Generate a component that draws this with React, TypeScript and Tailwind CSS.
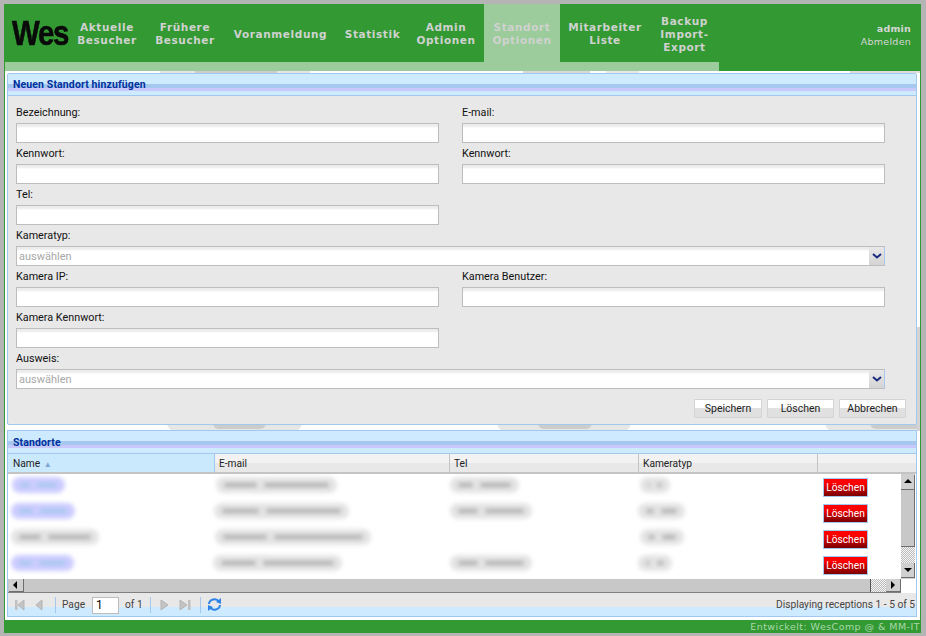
import React from 'react';

const NAV = [
  { lines: ['Aktuelle', 'Besucher'], w: 'w-[78px]' },
  { lines: ['Frühere', 'Besucher'], w: 'w-[78px]' },
  { lines: ['Voranmeldung'], w: 'w-[113px]' },
  { lines: ['Statistik'], w: 'w-[71px]' },
  { lines: ['Admin', 'Optionen'], w: 'w-[76px]' },
  { lines: ['Standort', 'Optionen'], w: 'w-[76px]', active: true },
  { lines: ['Mitarbeiter', 'Liste'], w: 'w-[90px]' },
  { lines: ['Backup', 'Import-', 'Export'], w: 'w-[69px]' },
];

const ROWS = [
  { name: [4, 53], nameBlue: true, mail: [2, 121], tel: [1, 69], cam: [2, 30] },
  { name: [3, 64], nameBlue: true, mail: [0, 135], tel: [1, 82], cam: [0, 47] },
  { name: [3, 88], nameBlue: false, mail: [1, 156], tel: null, cam: [2, 44] },
  { name: [3, 63], nameBlue: true, mail: [-1, 129], tel: [1, 82], cam: [0, 34] },
];

function Field({ label, className = '' }: { label: string; className?: string }) {
  return (
    <div className={`h-[41px] ${className}`}>
      <div className="h-[21px] pt-[4px] text-[10.8px] leading-[14px] text-[#111]">{label}</div>
      <div className="h-[20px] border border-[#bdbdbd] bg-gradient-to-b from-[#ececec] from-[2px] to-white to-[4px]" />
    </div>
  );
}

function Combo({ label }: { label: string }) {
  return (
    <div className="col-span-2 h-[41px]">
      <div className="h-[21px] pt-[4px] text-[10.8px] leading-[14px] text-[#111]">{label}</div>
      <div className="flex h-[20px] border border-[#bdbdbd] border-r-0 bg-gradient-to-b from-[#ececec] from-[2px] to-white to-[4px]">
        <div className="flex-1 pl-[2px] text-[11px] leading-[19px] text-[#a8a8a8]">auswählen</div>
        <div className="flex w-[16px] items-center justify-center border-r border-[#a9c6ec] bg-gradient-to-b from-[#e8e8e8] to-[#d4d4d4]">
          <svg width="10" height="6" viewBox="0 0 10 6">
            <path d="M1 1 L5 4.5 L9 1" fill="none" stroke="#1b2a80" strokeWidth="2" />
          </svg>
        </div>
      </div>
    </div>
  );
}

function PanelTitle({ title, tall }: { title: string; tall?: boolean }) {
  return (
    <div className={`relative ${tall ? 'h-[23px]' : 'h-[22px]'} border-b border-[#a3c8ee] bg-[#ceeaff]`}>
      <div className="absolute inset-x-0 top-[10px] h-[4px] bg-[#a6c8ef]" />
      <div className="absolute inset-x-0 top-[14px] h-[3px] bg-[#c8c8fc]" />
      <div
        className={`absolute left-[5px] ${tall ? 'top-[5px]' : 'top-[4px]'} text-[10.5px] font-bold leading-[14px] tracking-[0.12px] text-[#00309c]`}
      >
        {title}
      </div>
    </div>
  );
}

function WinButton({ dir, className = '' }: { dir: 'up' | 'down' | 'left' | 'right'; className?: string }) {
  const pts = {
    up: '1,6 5,2 9,6',
    down: '1,3 5,7 9,3',
    left: '6,1 2,5 6,9',
    right: '3,1 7,5 3,9',
  }[dir];
  return (
    <div className={`flex items-center justify-center bg-[#d0d0d0] border-r border-b border-[#6e6e6e] ${className}`}>
      <svg width="10" height="10" viewBox="0 0 10 10">
        <polygon points={pts} fill="#000" />
      </svg>
    </div>
  );
}

const dither = 'bg-[repeating-conic-gradient(#bdbdbd_0_25%,#f4f4f4_0_50%)] bg-[length:2px_2px]';

function Blur({ at, w, blue }: { at: number; w: number; blue?: boolean }) {
  return (
    <div
      className={`mt-[3px] flex h-[16px] items-center gap-[7px] rounded-full px-[8px] blur-[2px] ${blue ? 'bg-[#ccccff]' : 'bg-[#e4e4e4]'}`}
      style={{ marginLeft: at, width: w }}
    >
      <div className={`h-[4px] flex-1 rounded-full ${blue ? 'bg-[#a4c8ec]' : 'bg-[#b0b0b0]'}`} />
      <div className={`h-[4px] flex-[2] rounded-full ${blue ? 'bg-[#a4c8ec]' : 'bg-[#b0b0b0]'}`} />
    </div>
  );
}

function DataRow({ row }: { row: (typeof ROWS)[number] }) {
  return (
    <div className="flex h-[26px]">
      <div className="w-[206px]">
        <Blur at={row.name[0]} w={row.name[1]} blue={row.nameBlue} />
      </div>
      <div className="w-[235px]">
        <Blur at={row.mail[0]} w={row.mail[1]} />
      </div>
      <div className="w-[189px]">{row.tel && <Blur at={row.tel[0]} w={row.tel[1]} />}</div>
      <div className="w-[179px]">
        <Blur at={row.cam[0]} w={row.cam[1]} />
      </div>
      <div className="flex-1 pl-[6px] pt-[4px]">
        <button className="block h-[19px] w-[45px] border border-[#a3c8ee] bg-gradient-to-b from-[#ff0000] from-[25%] to-[#7a0000] text-center text-[10.2px] leading-[17px] text-white">
          Löschen
        </button>
      </div>
    </div>
  );
}

function PagerIcon({ points, bar }: { points: string; bar?: number }) {
  return (
    <svg width="12" height="12" viewBox="0 0 12 12">
      <polygon points={points} fill="#c4c4c4" stroke="#b4b4b4" />
      {bar !== undefined && <rect x={bar} y="1" width="2.5" height="10" fill="#c0c0c0" />}
    </svg>
  );
}

function FootButton({ label, w }: { label: string; w: string }) {
  return (
    <button
      className={`h-[19px] ${w} rounded-[1px] border border-[#d4d4d4] bg-gradient-to-b from-white from-[50%] to-[#e0e0e0] to-[50%] text-[10.5px] leading-[17px] text-[#222]`}
    >
      {label}
    </button>
  );
}

export default function App() {
  return (
    <div className="h-[636px] w-[926px] overflow-hidden bg-[#b4b4b4] pb-[3px] pl-[4px] pr-[5px] pt-[4px] font-['Roboto',sans-serif]">
      <div className="flex h-full flex-col bg-[#339933] px-[1px]">
        <header className="flex h-[67px] shrink-0">
          <div className="w-[714px] shrink-0">
            <div className="flex h-[58px]">
              <div className="flex w-[63px] items-center pb-[1px] pl-[7px]">
                <span className="origin-left scale-x-[0.84] font-['Liberation_Sans'] text-[35px] font-bold leading-none tracking-[-1.5px] text-[#0a0a0a] [-webkit-text-stroke:0.6px_#0a0a0a]">
                  Wes
                </span>
              </div>
              {NAV.map((item) => (
                <div
                  key={item.lines[0]}
                  className={`flex ${item.w} flex-col items-center justify-center pt-[2px] text-center font-['DejaVu_Sans'] text-[10.5px] font-bold leading-[13px] tracking-[0.6px] text-[#cfd2cf] ${
                    item.active ? 'bg-[#9ccc9c]' : ''
                  }`}
                >
                  {item.lines.map((line) => (
                    <span key={line}>{line}</span>
                  ))}
                </div>
              ))}
            </div>
            <div className="h-[9px] bg-[#9ccc9c]" />
          </div>
          <div className="flex flex-1 flex-col items-end pr-[9px] pt-[18px] font-['DejaVu_Sans'] text-[#d6d6d6]">
            <span className="text-[9.5px] font-bold leading-[13px] tracking-[0.2px]">admin</span>
            <span className="text-[9.5px] leading-[13px] tracking-[0.25px]">Abmelden</span>
          </div>
        </header>

        <main className="relative flex-1 overflow-hidden bg-white pl-[2px] pr-[3px] pt-[2px]">
          {/* watermark showing through the gaps */}
          <div className="absolute left-[155px] top-0 h-[2px] w-[150px] bg-[#e4e4e4]" />
          <div className="absolute left-[190px] top-0 h-[2px] w-[82px] bg-[#cccccc]" />
          <div className="absolute left-[518px] top-0 h-[2px] w-[67px] bg-[#d8d8d8]" />
          <div className="absolute left-[601px] top-0 h-[2px] w-[33px] bg-[#e8e8e8]" />
          <div className="absolute left-[845px] top-0 h-[2px] w-[70px] bg-[#dcdcdc]" />
          <div className="absolute left-[162px] top-[352px] h-[8px] w-[135px] rounded-b-[40px] bg-[#e6e6e6]" />
          <div className="absolute left-[208px] top-[352px] h-[6px] w-[53px] rounded-b-[24px] bg-[#cccccc]" />
          <div className="absolute left-[492px] top-[352px] h-[8px] w-[134px] rounded-b-[40px] bg-[#e6e6e6]" />
          <div className="absolute left-[533px] top-[352px] h-[6px] w-[54px] rounded-b-[24px] bg-[#cccccc]" />
          <div className="absolute left-[820px] top-[352px] h-[8px] w-[100px] rounded-bl-[40px] bg-[#e6e6e6]" />
          <div className="absolute left-[865px] top-[352px] h-[6px] w-[50px] rounded-bl-[24px] bg-[#cccccc]" />
          <div className="absolute right-0 top-[256px] h-[104px] w-[3px] bg-[#d4d4d4]" />

          <section className="relative h-[352px] rounded-[2px] border border-[#a3c8ee] bg-[#e8e8e8]">
            <PanelTitle title="Neuen Standort hinzufügen" />
            <div className="px-[8px] pt-[6px]">
              <div className="grid w-[869px] grid-cols-[423px_423px] gap-x-[23px]">
                <Field label="Bezeichnung:" />
                <Field label="E-mail:" />
                <Field label="Kennwort:" />
                <Field label="Kennwort:" />
                <Field label="Tel:" />
                <div />
                <Combo label="Kameratyp:" />
                <Field label="Kamera IP:" />
                <Field label="Kamera Benutzer:" />
                <Field label="Kamera Kennwort:" />
                <div />
                <Combo label="Ausweis:" />
              </div>
              <div className="flex justify-end gap-[5px] pr-[2px] pt-[10px]">
                <FootButton label="Speichern" w="w-[68px]" />
                <FootButton label="Löschen" w="w-[67px]" />
                <FootButton label="Abbrechen" w="w-[67px]" />
              </div>
            </div>
          </section>

          <section className="relative mt-[5px] flex h-[187px] flex-col border border-[#a3c8ee] bg-white">
            <PanelTitle title="Standorte" tall />
            <div className="flex h-[20px] shrink-0 border-b-2 border-[#c4c4c4] text-[10.2px] leading-[20px] text-[#222] [&>div]:bg-gradient-to-b [&>div]:from-[#f2f2f2] [&>div]:from-[50%] [&>div]:to-[#e8e8e8] [&>div]:to-[50%]">
              <div className="w-[206px] !bg-none !bg-[#cbe9fd] pl-[5px]">
                Name <span className="ml-[1px] text-[8px] text-[#7fa5d8]">▲</span>
              </div>
              <div className="w-[235px] border-l border-[#a3c8ee] pl-[4px]">E-mail</div>
              <div className="w-[189px] border-l border-[#c4c4c4] pl-[4px]">Tel</div>
              <div className="w-[179px] border-l border-[#c4c4c4] pl-[4px]">Kameratyp</div>
              <div className="flex-1 border-l border-[#c4c4c4]" />
            </div>
            <div className="flex h-[105px] shrink-0">
              <div className="w-[893px] overflow-hidden">
                {ROWS.map((row, i) => (
                  <DataRow key={i} row={row} />
                ))}
              </div>
              <div className="flex w-[14px] flex-col bg-[#d0d0d0] pt-[1px]">
                <WinButton dir="up" className="h-[15px]" />
                <div className="h-[57px] border-b border-r border-[#6e6e6e] bg-[#c8c8c8]" />
                <div className={`h-[16px] ${dither}`} />
                <WinButton dir="down" className="h-[15px]" />
              </div>
            </div>
            <div className="flex h-[14px] shrink-0">
              <div className="flex w-[893px] border-b border-[#808080] bg-[#c8c8c8] pl-[1px]">
                <WinButton dir="left" className="w-[15px]" />
                <div className="flex-1 border-r border-[#555]" />
                <div className={`w-[15px] ${dither}`} />
                <WinButton dir="right" className="w-[15px]" />
              </div>
            </div>
            <div className="flex flex-1 items-start bg-gradient-to-b from-[#e8e8e8] from-[60%] to-[#ceeaff] to-[60%] pl-[5px] pt-[4px] text-[10.2px] leading-[16px] text-[#444]">
              <div className="flex h-[16px] w-[42px] items-center gap-[7px] pl-[1px]">
                <PagerIcon points="10,1 4,6 10,11" bar={1} />
                <PagerIcon points="9,1 3,6 9,11" />
              </div>
              <div className="h-[16px] w-px bg-[#a3c8ee]" />
              <span className="ml-[6px] w-[23px]">Page</span>
              <div className="ml-[7px] h-[17px] w-[27px] border border-[#bdbdbd] bg-white pl-[3px] text-[12px] leading-[15px] text-black">
                1
              </div>
              <span className="ml-[6px] w-[25px]">of 1</span>
              <div className="h-[16px] w-px bg-[#a3c8ee]" />
              <div className="ml-[8px] flex h-[16px] items-center gap-[8px]">
                <PagerIcon points="2,1 9,6 2,11" />
                <PagerIcon points="1,1 8,6 1,11" bar={9} />
              </div>
              <div className="ml-[9px] h-[16px] w-px bg-[#a3c8ee]" />
              <svg className="ml-[6px]" width="15" height="15" viewBox="0 0 15 15" fill="none" stroke="#2f83e6" strokeWidth="2">
                <path d="M2 7 A5.5 5 0 0 1 12 4.5" />
                <path d="M13 8 A5.5 5 0 0 1 3 10.5" />
                <polygon points="14,1 14,7 9,5" fill="#2f83e6" stroke="none" />
                <polygon points="1,14 1,8 6,10" fill="#2f83e6" stroke="none" />
              </svg>
              <span className="ml-auto pr-[1px]">Displaying receptions 1 - 5 of 5</span>
            </div>
          </section>
        </main>

        <footer className="flex h-[13px] shrink-0 items-center justify-end font-['DejaVu_Sans'] text-[9.5px] leading-[13px] tracking-[0.45px] text-[#a9d8a9]">
          Entwickelt: WesComp @ &amp; MM-IT
        </footer>
      </div>
    </div>
  );
}
